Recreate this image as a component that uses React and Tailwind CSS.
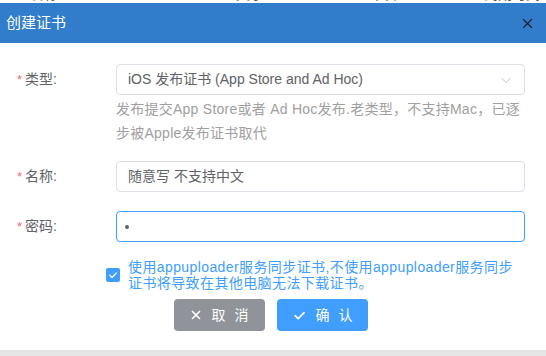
import React from 'react';

const FONT = "font-['Liberation_Sans','Noto_Sans_CJK_SC',sans-serif]";

function Required({ label }) {
    return (
        <div className="w-[99px] h-[31px] flex items-center text-[14px] text-[#606266]">
            <span className="text-[#f56c6c] mr-[3px] text-[13px]">*</span>
            <span>{label}:</span>
        </div>
    );
}

function ChevronDown() {
    return (
        <svg width="12" height="12" viewBox="0 0 12 12" fill="none">
            <path d="M1.5 4l4.5 4.5L10.5 4" stroke="#c0c4cc" strokeWidth="1" />
        </svg>
    );
}

function CloseIcon({ color = '#1a1a1a', size = 11, width = 1.2 }) {
    return (
        <svg width={size} height={size} viewBox="0 0 10 10" fill="none">
            <path d="M1 1l8 8M9 1l-8 8" stroke={color} strokeWidth={width} />
        </svg>
    );
}

function CheckIcon({ size = 12, width = 1.6 }) {
    return (
        <svg width={size} height={size} viewBox="0 0 12 12" fill="none">
            <path d="M2 6.2l2.8 2.8L10.2 3.4" stroke="#fff" strokeWidth={width} strokeLinecap="round" strokeLinejoin="round" />
        </svg>
    );
}

function App() {
    return (
        <div className={`w-[546px] h-[356px] overflow-hidden bg-[#e6e6e6] ${FONT}`}>
            {/* table header peeking above the dialog */}
            <div className="h-[3px] bg-white overflow-hidden">
                <div className="flex -mt-[14px] text-[14px] leading-[16px] text-[#555]">
                    <span className="ml-[30px]">名称</span>
                    <span className="ml-[178px]">文字</span>
                    <span className="ml-[106px]">平台</span>
                    <span className="ml-[86px]">到期时间</span>
                </div>
            </div>

            <div className="h-[347px] bg-white flex flex-col">
                <div className="h-[40px] bg-[#317dcc] flex items-center justify-between pl-[6px] pr-[13px]">
                    <span className="text-white text-[15px]">创建证书</span>
                    <CloseIcon />
                </div>

                <div className="pt-[21px] pl-[17px] pr-[21px]">
                    <div className="flex">
                        <Required label="类型" />
                        <div className="flex-1">
                            <div className="h-[31px] border border-[#dcdfe6] rounded-[4px] pl-[11px] pr-[12px] flex items-center justify-between text-[14px] text-[#606266]">
                                <span>iOS 发布证书 (App Store and Ad Hoc)</span>
                                <ChevronDown />
                            </div>
                            <div className="mt-[2px] text-[14px] leading-[24px] tracking-[0.25px] text-[#a0a0a0]">
                                发布提交App Store或者 Ad Hoc发布.老类型，不支持Mac，已逐<br />
                                步被Apple发布证书取代
                            </div>
                        </div>
                    </div>

                    <div className="flex mt-[16px]">
                        <Required label="名称" />
                        <div className="flex-1 h-[31px] border border-[#dcdfe6] rounded-[4px] px-[11px] flex items-center text-[14px] text-[#606266]">
                            随意写 不支持中文
                        </div>
                    </div>

                    <div className="flex mt-[19px]">
                        <Required label="密码" />
                        <div className="flex-1 h-[31px] border border-[#409eff] rounded-[4px] px-[8px] flex items-center">
                            <span className="w-[4px] h-[4px] rounded-full bg-[#606266]" />
                        </div>
                    </div>

                    <div className="flex items-center ml-[89px] mt-[17px]">
                        <div className="w-[14px] h-[14px] rounded-[2px] bg-[#409eff] flex items-center justify-center">
                            <CheckIcon size={10} width={1.5} />
                        </div>
                        <div className="ml-[8px] text-[14px] leading-[16px] tracking-[0.4px] text-[#409eff]">
                            使用appuploader服务同步证书,不使用appuploader服务同步<br />
                            证书将导致在其他电脑无法下载证书。
                        </div>
                    </div>

                    <div className="flex gap-[12px] ml-[157px] mt-[8px]">
                        <button className="w-[91px] h-[32px] rounded-[4px] bg-[#909399] text-white text-[14px] flex items-center justify-center">
                            <CloseIcon color="#fff" size={10} width={1.6} />
                            <span className="ml-[11px]">取</span>
                            <span className="ml-[9px]">消</span>
                        </button>
                        <button className="w-[91px] h-[32px] rounded-[4px] bg-[#409eff] text-white text-[14px] flex items-center justify-center">
                            <CheckIcon size={13} width={1.6} />
                            <span className="ml-[10px]">确</span>
                            <span className="ml-[9px]">认</span>
                        </button>
                    </div>
                </div>
            </div>
        </div>
    );
}

export default App;
